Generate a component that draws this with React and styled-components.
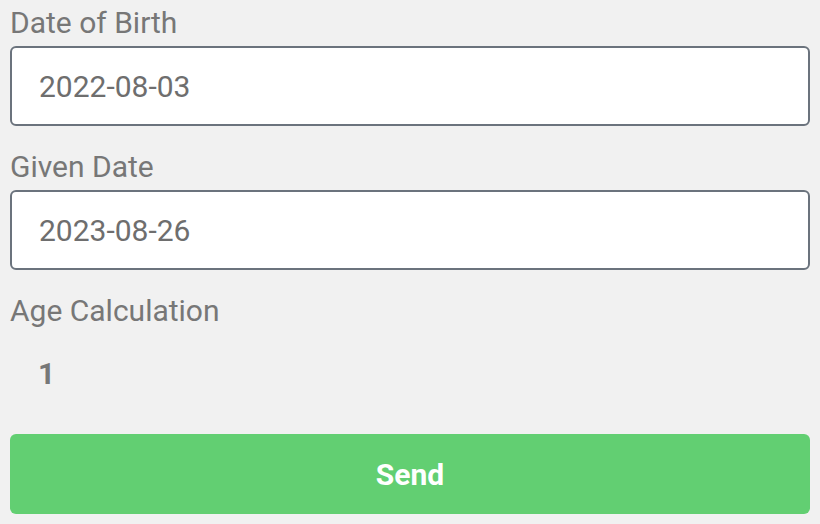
import React, { useState } from "react";
import styled, { createGlobalStyle } from "styled-components";

const Global = createGlobalStyle`
  html, body { margin: 0; padding: 0; background: #f1f1f1; }
  body { font-family: Roboto, "Liberation Sans", sans-serif; }
`;

const Form = styled.form`
  display: flex;
  flex-direction: column;
  padding: 5px 10px 10px;
`;

const Field = styled.div`
  display: flex;
  flex-direction: column;
  gap: 6px;
  margin-bottom: ${(p) => p.$mb ?? 23}px;
`;

const Label = styled.label`
  font-size: 30px;
  line-height: 35px;
  color: #777777;
`;

const Input = styled.input`
  box-sizing: border-box;
  height: 80px;
  width: 100%;
  border: 2px solid #6b737d;
  border-radius: 6px;
  background: #ffffff;
  padding: 0 27px;
  font-family: Roboto, "Liberation Sans", sans-serif;
  font-size: 30px;
  color: #6e6e6e;
  outline: none;
`;

const Result = styled.div`
  box-sizing: border-box;
  height: 100px;
  padding: 22px 28px 0;
  font-size: 30px;
  line-height: 35px;
  font-weight: 700;
  color: #777777;
`;

const Button = styled.button`
  height: 80px;
  width: 100%;
  border: none;
  border-radius: 6px;
  background: #62cf72;
  color: #ffffff;
  font-family: Roboto, "Liberation Sans", sans-serif;
  font-size: 30px;
  font-weight: 700;
  cursor: pointer;
`;

export default function App() {
  const [dob, setDob] = useState("2022-08-03");
  const [given, setGiven] = useState("2023-08-26");
  return (
    <>
      <Global />
      <Form onSubmit={(e) => e.preventDefault()}>
        <Field>
          <Label>Date of Birth</Label>
          <Input value={dob} onChange={(e) => setDob(e.target.value)} />
        </Field>
        <Field>
          <Label>Given Date</Label>
          <Input value={given} onChange={(e) => setGiven(e.target.value)} />
        </Field>
        <Field $mb={0}>
          <Label>Age Calculation</Label>
          <Result>1</Result>
        </Field>
        <Button type="submit">Send</Button>
      </Form>
    </>
  );
}
